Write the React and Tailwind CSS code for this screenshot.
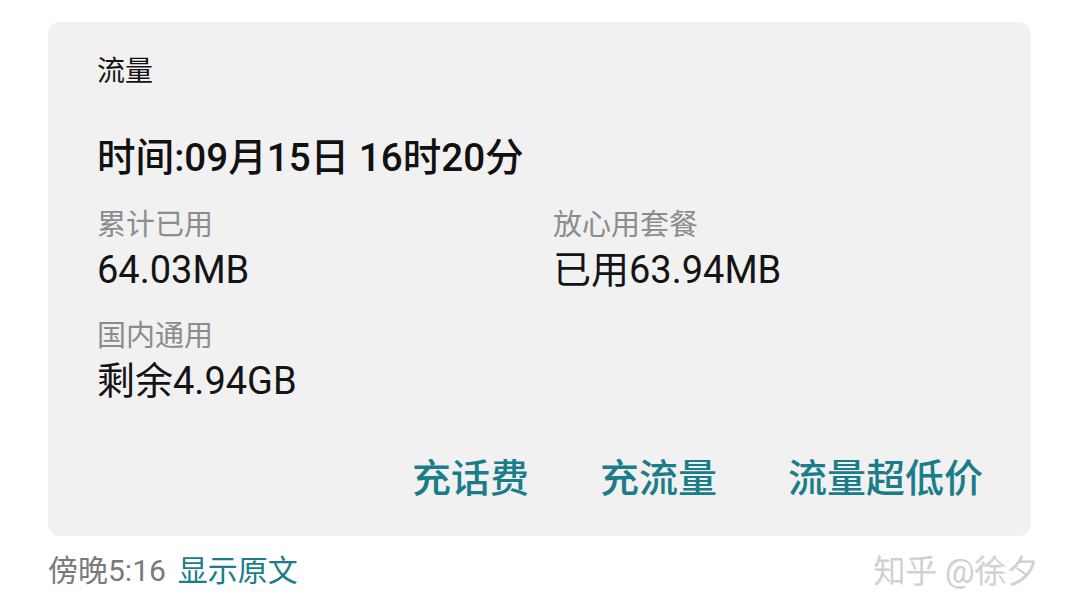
import React from "react";

const font = { fontFamily: "Roboto, 'Noto Sans CJK SC', sans-serif" };

const Stat = ({ label, value }) => (
  <div>
    <p className="text-[29px] leading-[40px] text-[#8c8c8c]">{label}</p>
    <p className="mt-px text-[38px] leading-[48px] text-[#141414]">{value}</p>
  </div>
);

const App = () => {
  return (
    <div
      className="w-[1067px] h-[614px] bg-white overflow-hidden"
      style={font}
    >
      <div className="ml-[48px] mt-[22px] w-[983px] rounded-[12px] bg-[#f1f1f1] pl-[49px] pr-[48px] pt-[30px] pb-[33px]">
        <h2 className="text-[28px] leading-[40px] text-[#141414]">流量</h2>
        <p className="mt-[42px] text-[38.6px] leading-[48px] font-medium text-[#111]">
          时间:09月15日 16时20分
        </p>
        <div className="mt-[23px] grid grid-cols-[456px_1fr] gap-y-[22px]">
          <Stat label="累计已用" value="64.03MB" />
          <Stat label="放心用套餐" value="已用63.94MB" />
          <Stat label="国内通用" value="剩余4.94GB" />
        </div>
        <div className="mt-[50px] flex justify-end gap-[71px] text-[39px] leading-[48px] font-medium text-[#1a7d89]">
          <span>充话费</span>
          <span>充流量</span>
          <span>流量超低价</span>
        </div>
      </div>
      <div className="mt-[15px] flex items-center justify-between pl-[48px] pr-[29px] leading-[40px]">
        <p className="flex gap-[12px] text-[30px]">
          <span className="text-[#7a7a7a]">傍晚5:16</span>
          <span className="text-[#1a7d89]">显示原文</span>
        </p>
        <span className="text-[32px] font-light text-[#cfcfcf] [text-shadow:1px_1px_0_rgba(0,0,0,0.18)]">
          知乎 @徐夕
        </span>
      </div>
    </div>
  );
};

export default App;
